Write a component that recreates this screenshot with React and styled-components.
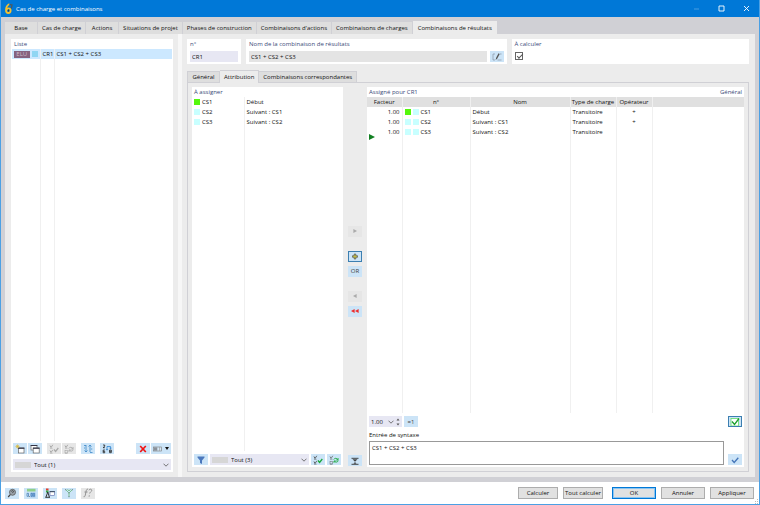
import { useState } from "react";
import styled, { createGlobalStyle, css } from "styled-components";

const GlobalStyle = createGlobalStyle`
  * {
    box-sizing: border-box;
  }
  body {
    margin: 0;
    font-family: "Open Sans", "Noto Sans", sans-serif;
    font-size: 6px;
    font-weight: 500;
    line-height: 8px;
    color: #111;
  }
  button, input, select, textarea {
    font: inherit;
    color: inherit;
    margin: 0;
  }
`;

const Window = styled.div`
  display: flex;
  flex-direction: column;
  height: 100vh;
  border: 1px solid #4ba0e4;
  border-top: 0;
  background: #fff;
`;

const TitleBar = styled.header`
  display: flex;
  align-items: center;
  height: 17px;
  padding-left: 3px;
  gap: 3px;
  background: #0078d7;
  color: #fff;

  h1 {
    flex: 1;
    margin: 0;
    font-size: 6px;
    font-weight: 500;
  }
`;

const WindowButtons = styled.div`
  display: flex;
`;

const WindowButton = styled.button`
  display: flex;
  justify-content: center;
  width: 25px;
  padding: 0;
  border: 0;
  background: none;
  opacity: ${(p) => (p.disabled ? 0.35 : 1)};
`;

const Main = styled.main`
  display: flex;
  flex-direction: column;
  flex: 1;
  min-height: 0;
  padding: 4px 4px 5px;
  background: #d0d0d5;
`;

const Tabs = styled.nav`
  display: flex;
  align-items: flex-end;
  height: ${(p) => (p.$inner ? 12 : 13)}px;
`;

const Tab = styled.button`
  height: ${(p) => (p.$active ? "100%" : "calc(100% - 1px)")};
  min-width: 33px;
  padding: 0 ${(p) => (p.$active && !p.$inner ? 5 : 4)}px;
  border: 0;
  border-right: 1px solid #d0d0d5;
  background: ${(p) => (p.$active ? "#ececec" : "#dedede")};
  white-space: nowrap;
  ${(p) =>
    p.$inner &&
    css`
      position: relative;
      height: ${p.$active ? "calc(100% + 1px)" : "calc(100% - 1px)"};
      margin-bottom: ${p.$active ? "-1px" : 0};
      border-top: 1px solid #d0d0d5;
      border-left: ${p.$first ? "1px solid #d0d0d5" : 0};
    `}
`;

const Page = styled.div`
  display: flex;
  flex: 1;
  min-height: 0;
  padding: 5px 6px;
  background: #ececec;
`;

const Card = styled.section`
  display: flex;
  flex-direction: column;
  min-width: 0;
  background: #fff;
`;

const ListCard = styled(Card)`
  width: 162px;
  padding: 0 1px 1px;
`;

const Splitter = styled.div`
  width: 4px;
  margin: -5px 5px;
  background: #f7f7f7;
`;

const Heading = styled.h2`
  margin: 0;
  padding: 1px 2px;
  color: #3a4a78;
  font-size: 6px;
  font-weight: 500;
  line-height: 8px;
`;

const TableArea = styled.div`
  flex: 1;
  min-height: 0;
`;

const Grid = styled.table`
  width: 100%;
  height: 100%;
  border-collapse: collapse;
  table-layout: fixed;

  th {
    height: 10px;
    padding: 0;
    background: #e0e0e0;
    border-right: 1px solid #efefef;
    font-weight: 500;
    white-space: nowrap;
  }
  td {
    height: 10px;
    padding: 0 2px;
    border-right: 1px solid #f0f0f0;
    white-space: nowrap;
    vertical-align: middle;
  }
  tr > :last-child {
    border-right: 0;
  }
  tbody tr:last-child td {
    height: auto;
    vertical-align: top;
  }
`;

const SelectedRow = styled.tr`
  background: #cce8ff;
`;

const NumberCell = styled.td`
  text-align: right;
`;

const CenterCell = styled.td`
  text-align: center;
`;

const Mark = styled.span`
  display: flex;
  align-items: center;
  gap: 2px;
`;

const Swatch = styled.i`
  flex: none;
  width: ${(p) => p.$w || 6}px;
  height: 6px;
  background: ${(p) => p.$color};
`;

const Badge = styled.span`
  width: 17px;
  height: 7px;
  background: #85627f;
  color: #cdbccb;
  line-height: 7px;
  text-align: center;
`;

const Toolbar = styled.div`
  display: flex;
  align-items: center;
  gap: ${(p) => p.$gap || 2}px;
  padding: ${(p) => p.$pad || "3px 2px 2px"};
`;

const Gap = styled.span`
  width: 3px;
`;

const Spacer = styled.span`
  flex: 1;
`;

const IconButton = styled.button`
  display: flex;
  align-items: center;
  justify-content: center;
  flex: none;
  gap: 3px;
  width: ${(p) => (p.$wide ? 20 : 14)}px;
  height: 11px;
  padding: 0;
  border: 0;
  outline: ${(p) => (p.$framed ? "1px solid #3c7fb1" : "0")};
  outline-offset: -1px;
  background: ${(p) => (p.disabled ? "#e6e6e6" : "#cce4f7")};
  color: ${(p) => (p.disabled ? "#999" : "#444")};
`;

const SelectBox = styled.label`
  display: flex;
  align-items: center;
  flex: 1;
  min-width: 0;
  height: 11px;
  padding: 0 2px;
  gap: 3px;
  background: #e7e7f3;

  select {
    flex: 1;
    min-width: 0;
    height: 11px;
    padding: 0;
    border: 0;
    appearance: none;
    background: none;
  }
`;

const Detail = styled.div`
  display: flex;
  flex-direction: column;
  flex: 1;
  min-width: 0;
`;

const Fields = styled.div`
  display: grid;
  grid-template-columns: 54px 260fr 237fr;
  gap: 5px;
  margin-bottom: 6px;
`;

const Field = styled(Card)`
  height: 25px;
  padding: 1px 3px 2px;
  gap: 3px;

  label {
    color: #3a4a78;
  }
`;

const TextInput = styled.input`
  flex: 1;
  min-width: 0;
  width: 100%;
  height: 11px;
  padding: 0 2px;
  border: 0;
  background: ${(p) => (p.readOnly ? "#e4e4e4" : "#e7e7f3")};
`;

const InputRow = styled.div`
  display: flex;
  gap: 3px;
`;

const Checkbox = styled.input`
  appearance: none;
  width: 8px;
  height: 8px;
  margin: 1px 0 0;
  border: 1px solid #666;
  background: #fff;

  &:checked::after {
    content: "";
    display: block;
    width: 5px;
    height: 2px;
    margin: 1px 0 0 1px;
    border: solid #555;
    border-width: 0 0 1px 1px;
    transform: rotate(-45deg);
  }
`;

const Pane = styled.div`
  display: flex;
  flex: 1;
  min-height: 0;
  padding: 4px;
  border: 1px solid #d0d0d5;
`;

const SourceCard = styled(Card)`
  flex: 151;
`;

const TargetCard = styled(Card)`
  flex: 377;
`;

const Transfer = styled.div`
  display: flex;
  flex-direction: column;
  align-items: center;
  justify-content: space-between;
  width: 24px;
  padding-bottom: 1px;
`;

const TransferGroup = styled.div`
  display: flex;
  flex-direction: column;
  gap: ${(p) => p.$gap || 4}px;
`;

const TargetHead = styled.div`
  display: flex;
  justify-content: space-between;
`;

const Syntax = styled.div`
  display: flex;
  align-items: flex-end;
  gap: 4px;
  padding: 0 2px 2px;

  textarea {
    flex: 1;
    height: 24px;
    padding: 2px;
    border: 1px solid #999;
    resize: none;
    outline: 0;
  }
`;

const SyntaxLabel = styled.label`
  padding: 2px;
`;

const Spin = styled.label`
  display: flex;
  align-items: center;
  width: 33px;
  height: 11px;
  padding: 0 2px;
  gap: 2px;
  background: #e7e7f3;

  input {
    flex: 1;
    min-width: 0;
    width: 10px;
    padding: 0;
    border: 0;
    background: none;
    outline: 0;
  }
`;

const Footer = styled.footer`
  position: relative;
  display: flex;
  align-items: center;
  gap: 5px;
  height: 22px;
  padding: 0 5px 0 4px;
`;

const Grip = styled.span`
  position: absolute;
  right: 0;
  bottom: 0;
  display: flex;
`;

const PushButton = styled.button`
  width: ${(p) => (p.$small ? 40 : 44)}px;
  height: 12px;
  padding: 0;
  border: 1px solid #adadad;
  background: #e1e1e1;
  line-height: 8px;
  white-space: nowrap;
  ${(p) =>
    p.$primary &&
    css`
      margin-left: 4px;
      border: 1px solid #0078d7;
      box-shadow: inset 0 0 0 1px #8cc4f0;
    `}
`;

const PointerSvg = styled.svg`
  display: block;
  margin-top: -3px;
`;

const Svg = ({ w = 10, h = 10, children }) => (
  <svg width={w} height={h} viewBox={`0 0 ${w} ${h}`} fill="none" aria-hidden="true">
    {children}
  </svg>
);

const Chevron = () => (
  <Svg w={6} h={4}>
    <path d="M.5 .7 3 3.2 5.500 .7" stroke="#555" strokeWidth=".8" />
  </Svg>
);

const Logo = () => (
  <Svg w={9} h={11}>
    <path d="M5.500 1C3 2.200 2 4.500 2 7c0 2 1 3 2.300 3C5.700 10 6.600 8.900 6.600 7.500 6.600 6 5.700 5.300 4.600 5.300 3.600 5.300 2.800 6 2.600 7" stroke="#f5c12e" strokeWidth="1.800" />
    <path d="M5.500 1.300 8 2 7.300 5.500" stroke="#4a5a60" strokeWidth="1.300" />
    <path d="M3.900 6.500h1.200v2H3.900z" fill="#27394a" />
  </Svg>
);

const NewIcon = () => (
  <Svg>
    <rect x="3.500" y="4" width="5.500" height="5" fill="#fff" stroke="#666" strokeWidth=".7" />
    <path d="M3.200 4.200h6.200" stroke="#334" strokeWidth="1.200" />
    <path d="M2.500 .5v4M.5 2.500h4M1.200 1.200l2.600 2.600M3.800 1.200 1.200 3.800" stroke="#d9b93a" strokeWidth=".7" />
  </Svg>
);

const CopyIcon = () => (
  <Svg>
    <rect x="1" y="1.500" width="6" height="4.500" fill="#fff" stroke="#666" strokeWidth=".7" />
    <path d="M.7 1.500h6.600" stroke="#334" />
    <rect x="3.200" y="4" width="6" height="5" fill="#fff" stroke="#666" strokeWidth=".7" />
    <path d="M2.900 4.200h6.600" stroke="#334" strokeWidth="1.200" />
  </Svg>
);

const ChecksIcon = ({ color = "#aaa", box = "#999", swap }) => (
  <Svg>
    <path d={swap ? "M1 1.500 2 3.500 3.800 .8" : "M1 1.500 2 3.500 3.800 .8M1 6.500l1 2 1.800-2.700"} stroke={box} strokeWidth=".8" />
    <path d="M1 4.300h2.500M1 9.200h2.500" stroke={box} strokeWidth=".5" />
    {swap ? (
      <>
        <rect x="1" y="6.500" width="2.500" height="2.500" stroke={box} strokeWidth=".5" />
        <path d="M4.800 4.500C5.500 2.800 8 3 8.600 4.600M9 3v2H7.200M9.300 5.500C8.800 7.500 6.200 7.500 5.400 6.200M5 7.800V6h1.800" stroke={color} strokeWidth=".9" />
      </>
    ) : (
      <path d="m5 5.500 1.600 2L9.300 4" stroke={color} strokeWidth="1.300" />
    )}
  </Svg>
);

const SortIcon = () => (
  <Svg>
    <path d="M1 1.500h2M3 1v7M1.500 6.500 3 8l1.500-1.500M5.500 2.500 7 1l1.500 1.500M7 1v7M7 8.500h2.500M8 5h1.300M1 4h1" stroke="#3c88c8" strokeWidth=".8" />
  </Svg>
);

const RenumberIcon = () => (
  <Svg>
    <path d="M1 1h1.700v1.300L1 3.700h1.900M2.900 6H1.200v2.800h1.500V7.400H1.200M7.600 6h1.700v2.700H7.600zM7.600 7.300h1.700" stroke="#222" strokeWidth=".8" />
    <path d="M5 5.500V2.500h3.500v2.200M7.400 3.700l1.100 1.200 1.100-1.200M4 5l1 1.200L6 5" stroke="#2e83cf" strokeWidth=".8" />
  </Svg>
);

const DeleteIcon = () => (
  <Svg>
    <path d="m2.200 2 5.600 6M7.800 2 2.200 8" stroke="#f01414" strokeWidth="1.700" />
  </Svg>
);

const ColumnsIcon = () => (
  <>
    <Svg w={9} h={6}>
      <rect x=".5" y="1" width="8" height="4" fill="#d5e7f5" stroke="#777" strokeWidth=".6" />
      <rect x=".8" y="1.300" width="3.500" height="3.400" fill="#8b929a" />
      <path d="M6.500 1v4" stroke="#999" strokeWidth=".6" />
    </Svg>
    <Svg w={4} h={3}>
      <path d="M0 0h4L2 3z" fill="#111" />
    </Svg>
  </>
);

const EditIcon = () => (
  <Svg>
    <path d="M3 2H1v6h2M8 2h1.500M5.500 8h4" stroke="#8897a3" strokeWidth=".7" />
    <path d="m3.600 8 .6-2.200L6.500 1.200l1.200.7L5.300 6.500z" fill="#555" />
  </Svg>
);

const FunnelIcon = () => (
  <Svg>
    <path d="M1.500 1.500h7v1L6 5.500V9L4 8V5.500l-2.500-3z" fill="#4b78bd" />
  </Svg>
);

const Arrow = ({ left, count = 1, color = "#aaa" }) => (
  <Svg w={count * 4} h={4}>
    {Array.from({ length: count }, (_, i) => (
      <path key={i} d={left ? `M${i * 4 + 3.6} 0v4L${i * 4} 2z` : "M.4 0v4L4 2z"} fill={color} />
    ))}
  </Svg>
);

const PlusIcon = () => (
  <Svg w={6} h={7}>
    <path d="M2.200 1h1.600v1.700h1.700v1.600H3.800V6H2.200V4.300H.5V2.700h1.700z" fill="#c9c43e" stroke="#555" strokeWidth=".7" />
  </Svg>
);

const CollapseIcon = () => (
  <Svg>
    <path d="M1.500 2.300h7M1.500 8.300h7" stroke="#333" strokeWidth=".9" />
    <path d="M2.500 3.300h5L5 5.800zM3.500 7.800 5 6l1.500 1.800z" fill="#444" />
  </Svg>
);

const ConfirmIcon = () => (
  <Svg>
    <rect x="1" y="1.500" width="7.500" height="7.500" fill="#fff" stroke="#5ddc67" strokeWidth=".8" />
    <path d="m2 4.500 2.500 3L9 1.500" stroke="#1c9f2c" strokeWidth="1.300" />
  </Svg>
);

const ApplyIcon = () => (
  <Svg>
    <path d="m2 5 2.200 2.500L8.300 2.800" stroke="#4475b8" strokeWidth="1.300" />
  </Svg>
);

const HelpIcon = () => (
  <Svg>
    <circle cx="5.500" cy="4.300" r="3" fill="#9aa3ab" stroke="#555" strokeWidth=".8" />
    <path d="M3.300 6.700 1.200 9" stroke="#444" strokeWidth="1.200" />
    <path d="M4.500 3.500c.2-1.300 2.100-1 1.900.1-.1.700-.9.700-.9 1.500" stroke="#333" strokeWidth=".8" />
  </Svg>
);

const UnitsIcon = () => (
  <Svg>
    <path d="M1 .8h8.500v2.700H1z" fill="#8fcf8b" />
    <path d="M4.300 4.500h5.200V9.500H4.300z" fill="#a5c9ee" />
    <path d="M1 5.300h1.500v3H1zM5 5.300h1.300v3H5zM7.300 5.300h1.300v3H7.300z" stroke="#2868a8" strokeWidth=".6" />
    <path d="M3.400 8v.8" stroke="#333" strokeWidth=".7" />
  </Svg>
);

const LegendIcon = () => (
  <Svg>
    <path d="M1 .5h2.500v2H1z" fill="#e43c28" />
    <path d="M1 2.500h2.500v2H1z" fill="#32a64a" />
    <path d="M.8 9.500 2.800 4 4.500 9.500M.5 9.300h4.300" stroke="#222" strokeWidth=".9" />
    <rect x="5" y="3.500" width="4.500" height="4" fill="#fff" stroke="#56a" strokeWidth=".6" />
    <path d="M4.700 3.700h5.100" stroke="#345" />
  </Svg>
);

const MembersIcon = () => (
  <Svg>
    <path d="M1.500 1.500 5 5l3.500-3.500M5 5v4M3.500 1.200 5 3l1.500-1.800" stroke="#73bd84" strokeWidth=".9" />
    <path d="M1 1h1.200v1.200H1zM7.800 1H9v1.200H7.800zM4.400 4.300h1.200v1.200H4.400zM4.400 8h1.200v1.200H4.400z" fill="#7d99a0" />
  </Svg>
);

const FunctionIcon = () => (
  <Svg>
    <path d="M5 1.200c-1.500-.3-1.700 1-2 2.500L2.300 7c-.3 1.500-.8 2-1.700 1.700M1.500 4h3" stroke="#888" strokeWidth=".9" />
    <path d="M6 2.300C6.300 .7 9 .8 8.700 2.600 8.500 3.800 7 3.800 6.700 5.500M6.300 7.300 6.100 8.700" stroke="#888" strokeWidth=".9" />
  </Svg>
);

const Pointer = () => (
  <PointerSvg width="6" height="6" viewBox="0 0 6 6" aria-hidden="true">
    <path d="M0 0v6l6-3z" fill="#128022" />
  </PointerSvg>
);

const MAIN_TABS = [
  "Base",
  "Cas de charge",
  "Actions",
  "Situations de projet",
  "Phases de construction",
  "Combinaisons d'actions",
  "Combinaisons de charges",
  "Combinaisons de résultats",
];

const DETAIL_TABS = ["Général", "Attribution", "Combinaisons correspondantes"];

const CASES = [
  { id: "CS1", name: "Début", color: "#55f70c", operator: "+" },
  { id: "CS2", name: "Suivant : CS1", color: "#c8ffff", operator: "+" },
  { id: "CS3", name: "Suivant : CS2", color: "#c8ffff", operator: "" },
];

const TabBar = ({ items, initial, inner }) => {
  const [active, setActive] = useState(initial);
  return (
    <Tabs $inner={inner}>
      {items.map((item, i) => (
        <Tab key={item} $inner={inner} $first={i === 0} $active={i === active} onClick={() => setActive(i)}>
          {item}
        </Tab>
      ))}
    </Tabs>
  );
};

const FilterSelect = ({ label, text }) => (
  <SelectBox>
    <Swatch $w={16} $color="#d6d6d6" />
    <select aria-label={label}>
      <option>{text}</option>
    </select>
    <Chevron />
  </SelectBox>
);

const ListPanel = () => (
  <ListCard>
    <Heading>Liste</Heading>
    <TableArea>
      <Grid>
        <colgroup>
          <col width="28" />
          <col width="14" />
          <col />
        </colgroup>
        <tbody>
          <SelectedRow>
            <td>
              <Mark>
                <Badge>ELU</Badge>
                <Swatch $color="#8fd6f3" />
              </Mark>
            </td>
            <td>CR1</td>
            <td>CS1 + CS2 + CS3</td>
          </SelectedRow>
          <tr>
            <td />
            <td />
            <td />
          </tr>
        </tbody>
      </Grid>
    </TableArea>
    <Toolbar $gap={1} $pad="2px 1px 5px">
      <IconButton aria-label="Nouveau"><NewIcon /></IconButton>
      <IconButton aria-label="Copier"><CopyIcon /></IconButton>
      <Gap />
      <IconButton disabled aria-label="Tout sélectionner"><ChecksIcon /></IconButton>
      <IconButton disabled aria-label="Inverser la sélection"><ChecksIcon swap /></IconButton>
      <Gap />
      <IconButton aria-label="Trier"><SortIcon /></IconButton>
      <Gap />
      <IconButton aria-label="Renuméroter"><RenumberIcon /></IconButton>
      <Spacer />
      <IconButton aria-label="Supprimer"><DeleteIcon /></IconButton>
      <IconButton $wide aria-label="Colonnes"><ColumnsIcon /></IconButton>
    </Toolbar>
    <Toolbar $pad="0 1px 1px">
      <FilterSelect label="Filtre de la liste" text="Tout (1)" />
    </Toolbar>
  </ListCard>
);

const SourcePanel = () => (
  <SourceCard>
    <Heading>À assigner</Heading>
    <TableArea>
      <Grid>
        <colgroup>
          <col width="52" />
          <col />
        </colgroup>
        <tbody>
          {CASES.map((c) => (
            <tr key={c.id}>
              <td>
                <Mark>
                  <Swatch $color={c.color} />
                  <span>{c.id}</span>
                </Mark>
              </td>
              <td>{c.name}</td>
            </tr>
          ))}
          <tr>
            <td />
            <td />
          </tr>
        </tbody>
      </Grid>
    </TableArea>
    <Toolbar>
      <IconButton aria-label="Filtrer"><FunnelIcon /></IconButton>
      <FilterSelect label="Filtre des cas" text="Tout (3)" />
      <IconButton aria-label="Tout sélectionner"><ChecksIcon color="#19a83b" box="#444" /></IconButton>
      <IconButton aria-label="Inverser la sélection"><ChecksIcon color="#19a83b" box="#666" swap /></IconButton>
    </Toolbar>
  </SourceCard>
);

const TransferPanel = () => (
  <Transfer>
    <span />
    <TransferGroup $gap={14}>
      <IconButton disabled aria-label="Ajouter"><Arrow /></IconButton>
      <TransferGroup>
        <IconButton $framed aria-label="Ajouter avec +"><PlusIcon /></IconButton>
        <IconButton>OR</IconButton>
      </TransferGroup>
      <TransferGroup>
        <IconButton disabled aria-label="Retirer"><Arrow left /></IconButton>
        <IconButton aria-label="Tout retirer"><Arrow left count={2} color="#ee2c2c" /></IconButton>
      </TransferGroup>
    </TransferGroup>
    <IconButton aria-label="Réduire"><CollapseIcon /></IconButton>
  </Transfer>
);

const TargetPanel = () => {
  const [syntax, setSyntax] = useState("CS1 + CS2 + CS3");
  const [factor, setFactor] = useState("1.00");
  return (
    <TargetCard>
      <TargetHead>
        <Heading>Assigné pour CR1</Heading>
        <Heading>Général</Heading>
      </TargetHead>
      <TableArea>
        <Grid>
          <colgroup>
            <col width="35" />
            <col width="68" />
            <col width="100" />
            <col width="46" />
            <col width="36" />
            <col />
          </colgroup>
          <thead>
            <tr>
              <th>Facteur</th>
              <th>n°</th>
              <th>Nom</th>
              <th>Type de charge</th>
              <th>Opérateur</th>
              <th />
            </tr>
          </thead>
          <tbody>
            {CASES.map((c) => (
              <tr key={c.id}>
                <NumberCell>1.00</NumberCell>
                <td>
                  <Mark>
                    <Swatch $color={c.color} />
                    <Swatch $color="#c8ffff" />
                    <span>{c.id}</span>
                  </Mark>
                </td>
                <td>{c.name}</td>
                <td>Transitoire</td>
                <CenterCell>{c.operator}</CenterCell>
                <td />
              </tr>
            ))}
            <tr>
              <td><Pointer /></td>
              <td />
              <td />
              <td />
              <td />
              <td />
            </tr>
          </tbody>
        </Grid>
      </TableArea>
      <Toolbar>
        <Spin>
          <input aria-label="Facteur" value={factor} onChange={(e) => setFactor(e.target.value)} />
          <Chevron />
          <Svg w={4} h={8}>
            <path d="M.5 2.500 2 .5l1.500 2zM.5 5.500l1.500 2 1.500-2z" fill="#555" />
          </Svg>
        </Spin>
        <IconButton onClick={() => setFactor("1.00")}>=1</IconButton>
        <Spacer />
        <IconButton $framed aria-label="Vérifier"><ConfirmIcon /></IconButton>
      </Toolbar>
      <SyntaxLabel htmlFor="syntax">Entrée de syntaxe</SyntaxLabel>
      <Syntax>
        <textarea id="syntax" value={syntax} onChange={(e) => setSyntax(e.target.value)} />
        <IconButton aria-label="Valider la syntaxe"><ApplyIcon /></IconButton>
      </Syntax>
    </TargetCard>
  );
};

const App = () => (
  <>
    <GlobalStyle />
    <Window>
      <TitleBar>
        <Logo />
        <h1>Cas de charge et combinaisons</h1>
        <WindowButtons>
          <WindowButton disabled aria-label="Réduire la fenêtre">
            <Svg w={7} h={7}><path d="M1 4h5" stroke="#fff" strokeWidth=".8" /></Svg>
          </WindowButton>
          <WindowButton aria-label="Agrandir">
            <Svg w={7} h={7}><path d="M1 1h5v5H1z" stroke="#fff" strokeWidth=".9" /></Svg>
          </WindowButton>
          <WindowButton aria-label="Fermer">
            <Svg w={7} h={7}><path d="m1 1 5 5M6 1 1 6" stroke="#fff" strokeWidth=".9" /></Svg>
          </WindowButton>
        </WindowButtons>
      </TitleBar>
      <Main>
        <TabBar items={MAIN_TABS} initial={7} />
        <Page>
          <ListPanel />
          <Splitter />
          <Detail>
            <Fields>
              <Field>
                <label htmlFor="number">n°</label>
                <TextInput id="number" defaultValue="CR1" />
              </Field>
              <Field>
                <label htmlFor="name">Nom de la combinaison de résultats</label>
                <InputRow>
                  <TextInput id="name" readOnly value="CS1 + CS2 + CS3" />
                  <IconButton aria-label="Modifier le nom"><EditIcon /></IconButton>
                </InputRow>
              </Field>
              <Field>
                <label htmlFor="solve">À calculer</label>
                <Checkbox id="solve" type="checkbox" defaultChecked />
              </Field>
            </Fields>
            <TabBar items={DETAIL_TABS} initial={1} inner />
            <Pane>
              <SourcePanel />
              <TransferPanel />
              <TargetPanel />
            </Pane>
          </Detail>
        </Page>
      </Main>
      <Footer>
        <IconButton aria-label="Aide"><HelpIcon /></IconButton>
        <IconButton aria-label="Unités"><UnitsIcon /></IconButton>
        <IconButton aria-label="Affichage"><LegendIcon /></IconButton>
        <IconButton aria-label="Structure"><MembersIcon /></IconButton>
        <IconButton disabled aria-label="Formule"><FunctionIcon /></IconButton>
        <Spacer />
        <PushButton $small>Calculer</PushButton>
        <PushButton $small>Tout calculer</PushButton>
        <PushButton $primary>OK</PushButton>
        <PushButton>Annuler</PushButton>
        <PushButton>Appliquer</PushButton>
        <Grip>
          <Svg w={5} h={5}>
            <path d="M3 0h1v1H3zM3 2h1v1H3zM1 2h1v1H1zM3 4h1v1H3zM1 4h1v1H1z" fill="#bbb" />
          </Svg>
        </Grip>
      </Footer>
    </Window>
  </>
);

export default App;
